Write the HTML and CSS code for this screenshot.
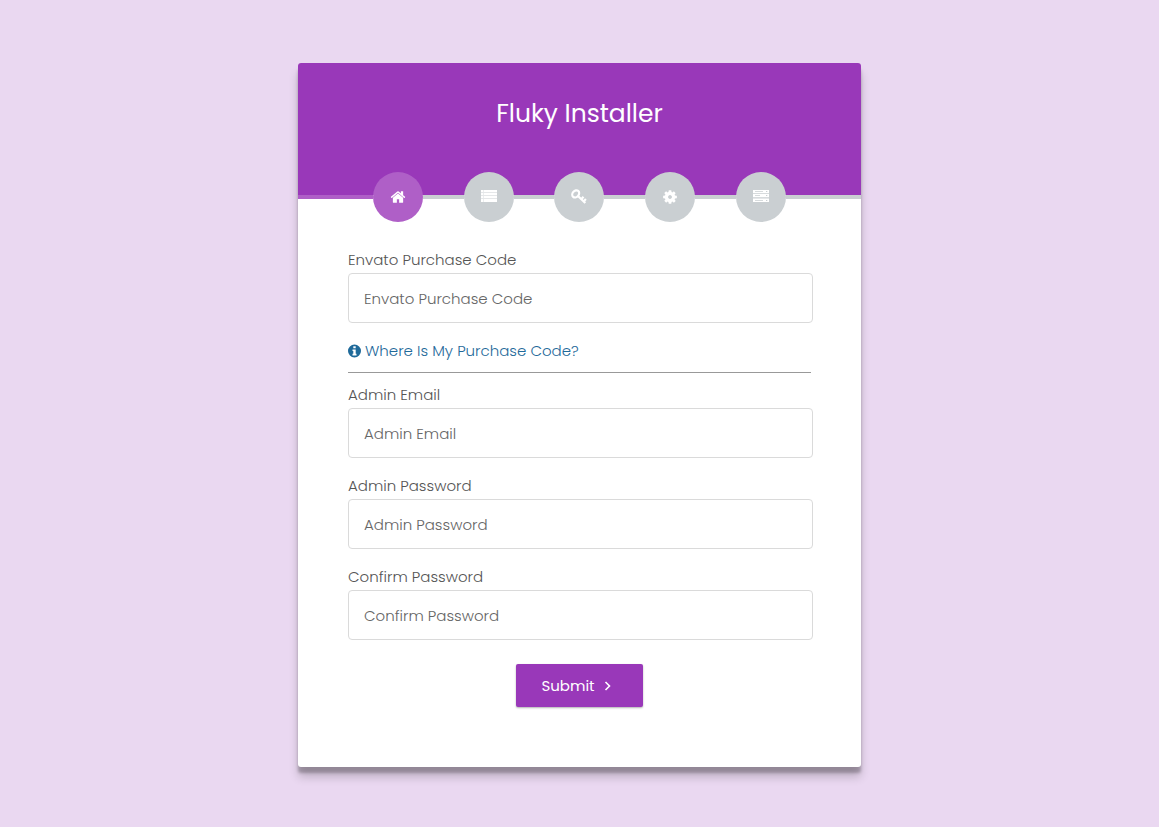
FILE: index.html
```
<!DOCTYPE html>
<html lang="en">
<head>
<meta charset="utf-8">
<meta name="viewport" content="width=device-width, initial-scale=1">
<title>Fluky Installer</title>
<link rel="stylesheet" href="styles.css">
</head>
<body>
<main class="card">
  <header class="header">
    <h1 class="title">Fluky Installer</h1>
  </header>
  <ol class="steps">
    <li class="line line-end line-active"></li>
    <li class="step step-active"><svg class="icon" viewBox="0 0 1792 1792" aria-label="Welcome"><path d="M1472 992v480q0 26-19 45t-45 19h-384v-384h-256v384h-384q-26 0-45-19t-19-45v-480q0-1 .5-3t.5-3l575-474 575 474q1 2 1 6zm223-69l-62 74q-8 9-21 11h-3q-13 0-21-7l-692-577-692 577q-12 8-24 7-13-2-21-11l-62-74q-8-10-7-23.5t11-21.5l719-599q32-26 76-26t76 26l244 204v-195q0-14 9-23t23-9h192q14 0 23 9t9 23v408l219 182q10 8 11 21.5t-7 23.5z"/></svg></li>
    <li class="line"></li>
    <li class="step"><svg class="icon" viewBox="0 0 16 16" aria-label="Requirements"><path opacity=".5" d="M0 1h16v12H0z"/><path d="M0 1h2.300v2H0zM3 1h13v2H3zM0 4h2.300v2H0zM3 4h13v2H3zM0 7h2.300v2H0zM3 7h13v2H3zM0 10h2.300v3H0zM3 10h13v3H3z"/></svg></li>
    <li class="line"></li>
    <li class="step"><svg class="icon" viewBox="0 0 16 16" aria-label="Permissions"><g fill="none" stroke="currentColor" stroke-width="2.200"><ellipse cx="4.700" cy="4.900" rx="3.100" ry="3.900" transform="rotate(40 4.700 4.900)"/><path d="M7.200 7.200l7.100 6.800M10.300 10.200l2.200-2.400M12.700 12.400l2.200-2.300"/></g></svg></li>
    <li class="line"></li>
    <li class="step"><svg class="icon" viewBox="0 0 1792 1792" aria-label="Environment"><path d="M1112 896q0-90-63-153t-153-63-153 63-63 153 63 153 153 63 153-63 63-153zm552-109v222q0 12-8 23t-20 13l-185 28q-19 54-39 91 35 50 107 138 10 12 10 25t-9 23q-27 37-99 108t-94 71q-12 0-26-9l-138-108q-44 23-91 38-16 136-29 186-7 28-36 28h-222q-14 0-24.500-8.500t-11.500-21.500l-28-184q-49-16-90-37l-141 107q-10 9-25 9-14 0-25-11-126-114-165-168-7-10-7-23 0-12 8-23 15-21 51-66.500t54-70.500q-27-50-41-99l-183-27q-13-2-21-12.500t-8-23.500v-222q0-12 8-23t19-13l186-28q14-46 39-92-40-57-107-138-10-12-10-24 0-10 9-23 26-36 98.500-107.500t94.500-71.500q13 0 26 10l138 107q44-23 91-38 16-136 29-186 7-28 36-28h222q14 0 24.500 8.500t11.500 21.500l28 184q49 16 90 37l142-107q9-9 24-9 13 0 25 10 129 119 165 170 7 8 7 22 0 12-8 23-15 21-51 66.500t-54 70.500q26 50 41 98l183 28q13 2 21 12.500t8 23.500z"/></svg></li>
    <li class="line"></li>
    <li class="step"><svg class="icon" viewBox="0 0 16 16" aria-label="Finish"><path fill-rule="evenodd" d="M0 1h16v3.300H0zM2 2.200v.8h8v-.8zM13 2.100v1h1.300v-1zM0 5h16v3.300H0zM2 6.200v.7h5v-.7zM13 6.100v1h1.300v-1zM0 9.400h16V13H0zM2 11v.8h8v-.8zM13 10.900v1h1.300v-1z"/></svg></li>
    <li class="line line-end"></li>
  </ol>
  <form class="form">
    <div class="field">
      <label for="code">Envato Purchase Code</label>
      <input id="code" type="text" placeholder="Envato Purchase Code">
    </div>
    <a class="help" href="#"><svg class="info" viewBox="0 0 14 14" aria-hidden="true"><path fill-rule="evenodd" d="M6.500 .5a6.500 6.500 0 1 0 0 13a6.500 6.500 0 1 0 0-13zM5.300 2.300h2.400v2H5.300zM4.500 5.400h3.200v4.400h.8v1.600h-4V9.800h.8V7h-.8z"/></svg>Where Is My Purchase Code?</a>
    <hr class="rule">
    <div class="field">
      <label for="email">Admin Email</label>
      <input id="email" type="email" placeholder="Admin Email">
    </div>
    <div class="field">
      <label for="password">Admin Password</label>
      <input id="password" type="password" placeholder="Admin Password">
    </div>
    <div class="field">
      <label for="confirm">Confirm Password</label>
      <input id="confirm" type="password" placeholder="Confirm Password">
    </div>
    <button class="submit" type="submit">Submit<svg class="angle" viewBox="0 0 8 12" aria-hidden="true"><path d="M1.500 2l4 4-4 4" fill="none" stroke="currentColor" stroke-width="1.600"/></svg></button>
  </form>
</main>
</body>
</html>
```
FILE: styles.css
```
* {
  box-sizing: border-box;
}

body {
  margin: 0;
  min-height: 100vh;
  padding: 63px 16px 60px;
  background: #ead8f1;
  color: #555;
  font: 300 15px/24px Poppins, Inter, "Open Sans", sans-serif;
}

.card {
  max-width: 563px;
  margin: 0 auto;
  background: #fff;
  border-radius: 3px;
  box-shadow: 0 10px 10px rgba(0, 0, 0, 0.19), 0 6px 3px rgba(0, 0, 0, 0.23);
}

.header {
  padding: 31px 30px 61px;
  background: #9938b9;
  border-radius: 3px 3px 0 0;
  color: #fff;
  text-align: center;
}

.title {
  margin: 0;
  font-size: 25px;
  font-weight: 400;
  line-height: 40px;
}

.steps {
  display: flex;
  align-items: center;
  margin: -23px 0 0;
  padding: 0;
  list-style: none;
}

.line {
  flex: 27;
  height: 4px;
  background: #cacfd2;
}

.line-end {
  flex: 50;
}

.line-active {
  background: #af5fc7;
}

.step {
  display: flex;
  flex: none;
  align-items: center;
  justify-content: center;
  width: 50px;
  height: 50px;
  border-radius: 50%;
  background: #cacfd2;
  color: #fff;
}

.step-active {
  background: #af5fc7;
}

.icon {
  width: 16px;
  height: 16px;
  fill: currentColor;
}

.form {
  display: flex;
  flex-direction: column;
  align-items: stretch;
  padding: 26px 50px 60px;
}

.field {
  display: flex;
  flex-direction: column;
  margin: 0 -2px 16px 0;
}

.field label {
  padding-bottom: 1px;
}

.field input {
  width: 100%;
  height: 50px;
  padding: 0 15px;
  border: 1px solid #dadada;
  border-radius: 4px;
  background: #fff;
  color: #555;
  font: inherit;
}

.field input::placeholder {
  color: #666;
  opacity: 1;
}

.help {
  display: flex;
  align-items: center;
  gap: 3px;
  align-self: flex-start;
  color: #1f6a9a;
  text-decoration: none;
}

.info {
  width: 14px;
  height: 14px;
  fill: currentColor;
}

.rule {
  width: 100%;
  height: 1px;
  margin: 9px 0 10px;
  border: 0;
  background: #999;
}

.submit {
  display: flex;
  align-items: center;
  align-self: center;
  gap: 9px;
  height: 43px;
  margin-top: 8px;
  padding: 0 31px 0 25px;
  border: 0;
  border-radius: 2px;
  background: #9938b9;
  box-shadow: 0 1px 2px rgba(0, 0, 0, 0.3);
  color: #fff;
  font: inherit;
  font-weight: 400;
}

.angle {
  width: 8px;
  height: 12px;
}
```
